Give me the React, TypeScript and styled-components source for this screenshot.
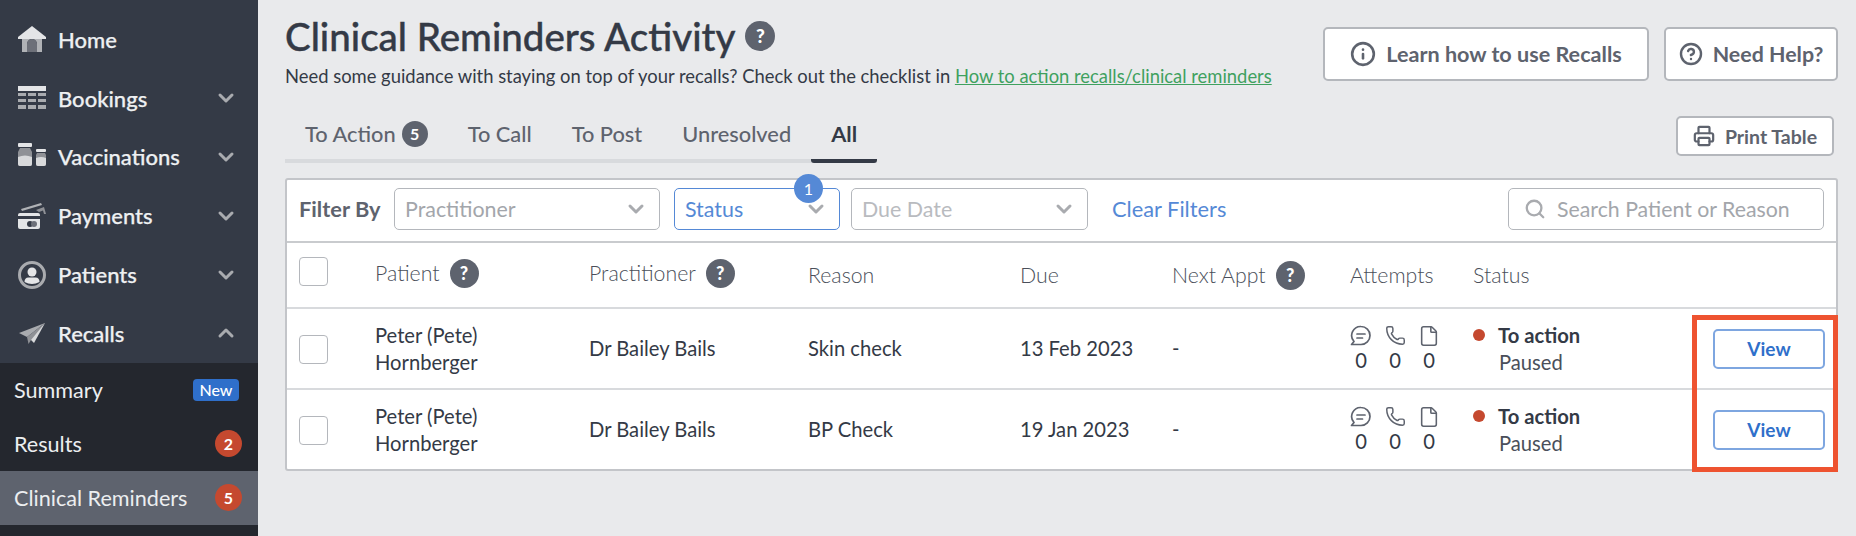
import React from "react";
import styled, { createGlobalStyle } from "styled-components";
import { ChevronDown, ChevronUp, CircleHelp, File, Info, Phone, Printer, Search } from "lucide-react";

const GlobalStyle = createGlobalStyle`
    html, body {
        margin: 0;
        height: 536px;
        overflow: hidden;
        background: #e9eaec;
        font-family: "Lato", "Liberation Sans", sans-serif;
        color: #343a46;
    }
    * { box-sizing: border-box; }
`;

const Page = styled.div`
    display: flex;
    height: 536px;
    width: 1856px;
`;

/* ------------------------------- Sidebar ------------------------------- */

const Sidebar = styled.nav`
    width: 258px;
    flex: none;
    height: 536px;
    background: #24272e;
    display: flex;
    flex-direction: column;
`;

const NavGroup = styled.div`
    background: #343a46;
    padding-top: 10px;
`;

const NavItem = styled.div`
    height: 58.8px;
    display: flex;
    align-items: center;
    padding: 0 20px 0 18px;
    color: #eef0f2;
    font-size: 22px;
    font-weight: 500;
    -webkit-text-stroke: 0.25px #eef0f2;
`;

const NavIcon = styled.svg`
    width: 28px;
    height: 28px;
    margin-right: 12px;
    flex: none;
    color: #c9cbce;
`;

const NavLabel = styled.span`
    flex: 1;
`;

const SubItem = styled.div<{ $active?: boolean }>`
    height: 54px;
    display: flex;
    align-items: center;
    justify-content: space-between;
    padding: 0 16px 0 14px;
    font-size: 21.6px;
    color: #eceef0;
    background: ${(p) => (p.$active ? "#5e636e" : "transparent")};
`;

const NewPill = styled.span`
    width: 46px;
    height: 22px;
    margin-right: 3px;
    border-radius: 4px;
    background: #2f6fca;
    color: #fff;
    font-size: 16px;
    font-weight: 500;
    display: flex;
    align-items: center;
    justify-content: center;
`;

const CountBadge = styled.span`
    width: 27px;
    height: 27px;
    border-radius: 50%;
    background: #c5492f;
    color: #fff;
    font-size: 16px;
    font-weight: 700;
    display: flex;
    align-items: center;
    justify-content: center;
`;

/* -------------------------------- Main --------------------------------- */

const Main = styled.main`
    flex: 1;
    min-width: 0;
    padding: 0 18px 0 27px;
`;

const TopBar = styled.header`
    display: flex;
    justify-content: space-between;
    align-items: flex-start;
    height: 110px;
`;

const TitleBlock = styled.div`
    padding-top: 14px;
`;

const Title = styled.h1`
    margin: 0;
    height: 44px;
    font-size: 38.5px;
    line-height: 44px;
    font-weight: 500;
    -webkit-text-stroke: 0.4px #343a46;
    color: #343a46;
    display: flex;
    align-items: center;
    gap: 10px;
`;

const Guidance = styled.p`
    margin: 7px 0 0;
    font-size: 18.4px;
    line-height: 22px;
    color: #343a46;
`;

const GuidanceLink = styled.a`
    color: #3fa15f;
    text-decoration: underline;
`;

const HelpDot = styled.span<{ $size?: number }>`
    width: ${(p) => p.$size ?? 29}px;
    height: ${(p) => p.$size ?? 29}px;
    border-radius: 50%;
    background: #5e636e;
    color: #fff;
    font-size: ${(p) => Math.round((p.$size ?? 29) * 0.62)}px;
    font-weight: 900;
    flex: none;
    display: inline-flex;
    align-items: center;
    justify-content: center;
    -webkit-text-stroke: 0;
`;

const TopActions = styled.div`
    display: flex;
    gap: 15px;
    padding-top: 27px;
`;

const OutlineButton = styled.button<{ $height: number; $size: number; $width: number }>`
    width: ${(p) => p.$width}px;
    height: ${(p) => p.$height}px;
    background: #fff;
    border: 2px solid #b4b7bc;
    border-radius: 5px;
    color: #5e636e;
    font-family: inherit;
    font-size: ${(p) => p.$size}px;
    font-weight: 700;
    padding: 0;
    display: flex;
    align-items: center;
    justify-content: center;
    gap: 10px;
`;

const TabBar = styled.div`
    display: flex;
    justify-content: space-between;
    align-items: flex-start;
    height: 68px;
`;

const Tabs = styled.div`
    display: flex;
    height: 53px;
    border-bottom: 4px solid #d8dadd;
`;

const Tab = styled.div<{ $active?: boolean }>`
    height: 53px;
    padding: 0 20px 2px;
    display: flex;
    align-items: center;
    gap: 6px;
    font-size: 21.8px;
    font-weight: ${(p) => (p.$active ? 700 : 500)};
    color: ${(p) => (p.$active ? "#343a46" : "#5e636e")};
    border-bottom: 4px solid ${(p) => (p.$active ? "#343a46" : "transparent")};
    border-radius: ${(p) => (p.$active ? "3px" : "0")};
`;

const TabCount = styled.span`
    width: 26px;
    height: 26px;
    border-radius: 50%;
    background: #5e636e;
    color: #fff;
    font-size: 16px;
    font-weight: 700;
    display: flex;
    align-items: center;
    justify-content: center;
`;

const PrintSlot = styled.div`
    padding: 6px 4px 0 0;
`;

/* -------------------------------- Table -------------------------------- */

const Card = styled.section`
    position: relative;
    background: #fff;
    border: 2px solid #c3c5c9;
    border-radius: 3px;
    width: 1553px;
`;

const FilterBar = styled.div`
    height: 63px;
    display: flex;
    align-items: center;
    padding: 0 12px 4px 12px;
    border-bottom: 2px solid #c9cbce;
`;

const FilterLabel = styled.span`
    width: 95px;
    flex: none;
    font-size: 21.8px;
    font-weight: 700;
    color: #5e636e;
`;

const Select = styled.div<{ $width: number; $focus?: boolean; $gap: number; $faint?: boolean }>`
    position: relative;
    width: ${(p) => p.$width}px;
    height: 42px;
    margin-right: ${(p) => p.$gap}px;
    flex: none;
    border: 1px solid ${(p) => (p.$focus ? "#5589d6" : "#b4b7bc")};
    border-radius: 5px;
    padding: 0 11px 0 10px;
    display: flex;
    align-items: center;
    justify-content: space-between;
    font-size: 21.4px;
    color: ${(p) => (p.$focus ? "#5589d6" : p.$faint ? "#b9bbbf" : "#a3a6ab")};
`;

const SelectBadge = styled.span`
    position: absolute;
    top: -15px;
    right: 16px;
    width: 29px;
    height: 29px;
    border-radius: 50%;
    background: #5589d6;
    color: #fff;
    font-size: 16px;
    display: flex;
    align-items: center;
    justify-content: center;
`;

const ClearFilters = styled.a`
    font-size: 21.8px;
    color: #5589d6;
    flex: 1;
`;

const SearchBox = styled.div`
    width: 316px;
    height: 42px;
    border: 1px solid #b4b7bc;
    border-radius: 5px;
    padding: 0 12px 0 15px;
    display: flex;
    align-items: center;
    gap: 11px;
    font-size: 21.3px;
    color: #a3a6ab;
`;

const Row = styled.div<{ $height: number; $last?: boolean }>`
    display: grid;
    grid-template-columns: 76px 214px 219px 212px 152px 178px 123px 240px 112px;
    align-items: center;
    padding-left: 12px;
    height: ${(p) => p.$height}px;
    border-bottom: ${(p) => (p.$last ? "none" : "2px solid #d8dadd")};
    font-size: 20.2px;
    line-height: 27px;
`;

const HeaderCell = styled.div<{ $raised?: boolean }>`
    display: flex;
    align-items: center;
    gap: 10px;
    margin-bottom: ${(p) => (p.$raised ? 3 : 0)}px;
    font-size: 21.3px;
    font-weight: 300;
    color: #4a4f5a;
`;

const CheckBox = styled.span<{ $head?: boolean }>`
    display: block;
    width: 29px;
    height: 29px;
    margin: ${(p) => (p.$head ? "0 0 7px" : "2px 0 0")};
    background: #fff;
    border: 1px solid #b4b7bc;
    border-radius: 4px;
`;

const Attempts = styled.div`
    display: grid;
    grid-template-columns: repeat(3, 22px);
    column-gap: 12px;
    justify-items: center;
    color: #5e636e;
`;

const AttemptCount = styled.span`
    color: #343a46;
    line-height: 26px;
`;

const StatusCell = styled.div`
    display: grid;
    grid-template-columns: 12px auto;
    column-gap: 13px;
    align-items: center;
`;

const StatusDot = styled.span`
    width: 12px;
    height: 12px;
    border-radius: 50%;
    background: #c5492f;
`;

const StatusName = styled.span`
    font-weight: 700;
`;

const StatusNote = styled.span`
    grid-column: 2;
    padding-left: 1px;
    color: #4a4f5a;
`;

const ViewButton = styled.button`
    width: 112px;
    height: 40px;
    background: #fff;
    border: 2px solid #7ea6e0;
    border-radius: 5px;
    color: #2f6fca;
    font-family: inherit;
    font-size: 19px;
    font-weight: 700;
    padding: 0;
`;

const Highlight = styled.div`
    position: absolute;
    right: -2px;
    bottom: -3px;
    width: 146px;
    height: 157px;
    border: 5px solid #ee5330;
    pointer-events: none;
`;

/* -------------------------------- Icons -------------------------------- */

const HomeIcon = () => (
    <NavIcon viewBox="0 0 28 28">
        <path d="M14 1 L28 12 V14 H0 V12 Z" fill="#e4e5e7" />
        <path d="M4 14 H24 V27 H19 V19 a5 5 0 0 0 -10 0 V27 H4 Z" fill="#b0b2b6" />
        <path d="M9 27 V19 a5 5 0 0 1 10 0 V27 Z" fill="#6d7079" />
    </NavIcon>
);

const BookingsIcon = () => (
    <NavIcon viewBox="0 0 28 28" fill="#a9abaf">
        <rect y="2" width="28" height="5" fill="#e4e5e7" />
        <rect y="9" width="8" height="3" />
        <rect x="10" y="9" width="8" height="3" />
        <rect x="20" y="9" width="8" height="3" />
        <rect y="15" width="8" height="3" />
        <rect x="10" y="15" width="8" height="3" />
        <rect x="20" y="15" width="8" height="3" />
        <rect y="21" width="8" height="4" />
        <rect x="10" y="21" width="8" height="4" />
        <rect x="20" y="21" width="8" height="4" />
    </NavIcon>
);

const VaccinationsIcon = () => (
    <NavIcon viewBox="0 0 28 28">
        <rect x="0" y="0" width="14" height="4" rx="1" fill="#e4e5e7" />
        <path d="M2 5 H12 L14 9 V21 q0 2 -2 2 H2 q-2 0 -2 -2 V9 Z" fill="#8f9196" />
        <path d="M0 14 q7 -3 14 0 V21 q0 2 -2 2 H2 q-2 0 -2 -2 Z" fill="#d8d9db" />
        <rect x="18" y="6" width="10" height="3" rx="1" fill="#e4e5e7" />
        <path d="M19 10 H27 L28 12 V21 q0 2 -2 2 H20 q-2 0 -2 -2 V12 Z" fill="#8f9196" />
        <path d="M18 15 q5 -2 10 0 V21 q0 2 -2 2 H20 q-2 0 -2 -2 Z" fill="#d8d9db" />
    </NavIcon>
);

const PaymentsIcon = () => (
    <NavIcon viewBox="0 0 28 28">
        <path d="M3 7 L23 1 L24 3 L4 9 Z" fill="#b0b2b6" />
        <path d="M18 8 L26 5 L28 12 H26 L25 8.5 L21 10 Z" fill="#8f9196" />
        <rect x="0" y="11" width="22" height="16" rx="2" fill="#e4e5e7" />
        <rect x="0" y="14" width="22" height="3" fill="#343a46" />
        <circle cx="12" cy="22" r="3" fill="#343a46" />
        <circle cx="16" cy="22" r="3" fill="#6d7079" />
    </NavIcon>
);

const PatientsIcon = () => (
    <NavIcon viewBox="0 0 28 28">
        <circle cx="14" cy="14" r="12.5" fill="none" stroke="#a9abaf" strokeWidth="3" />
        <circle cx="14" cy="11" r="4.5" fill="#e4e5e7" />
        <path d="M6.5 21 q0 -4.5 4 -4.5 h7 q4 0 4 4.5 q-7.500 4 -15 0 Z" fill="#e4e5e7" />
    </NavIcon>
);

const RecallsIcon = () => (
    <NavIcon viewBox="0 0 28 28">
        <path d="M27 4 L1 14 L9 18 Z" fill="#a9abaf" />
        <path d="M27 4 L11 19 L16 24 Z" fill="#d8d9db" />
        <path d="M27 4 L9 18 L10.500 25 L13 21 Z" fill="#8f9196" />
    </NavIcon>
);

const ChatIcon = () => (
    <svg width="22" height="22" viewBox="0 0 22 22" fill="none" stroke="currentColor" strokeWidth="1.7" strokeLinecap="round" strokeLinejoin="round">
        <path d="M11 1.500 a9 9 0 0 1 0 18 H1.500 L4 16.500 A9 9 0 0 1 11 1.500 Z" />
        <path d="M7 9 H15" />
        <path d="M7 13 H12.500" />
    </svg>
);

const NavChevron = ({ up = false }: { up?: boolean }) =>
    up ? <ChevronUp size={24} color="#a9abaf" strokeWidth={3} /> : <ChevronDown size={24} color="#a9abaf" strokeWidth={3} />;

const SelectChevron = () => <ChevronDown size={24} color="#a9abaf" strokeWidth={3} />;

/* --------------------------------- Data -------------------------------- */

const NAV = [
    { label: "Home", Icon: HomeIcon, chevron: false },
    { label: "Bookings", Icon: BookingsIcon, chevron: true },
    { label: "Vaccinations", Icon: VaccinationsIcon, chevron: true },
    { label: "Payments", Icon: PaymentsIcon, chevron: true },
    { label: "Patients", Icon: PatientsIcon, chevron: true },
];

const RECALLS = [
    { id: 1, reason: "Skin check", due: "13 Feb 2023" },
    { id: 2, reason: "BP Check", due: "19 Jan 2023" },
];

const App = () => {
    return (
        <Page>
            <GlobalStyle />
            <Sidebar>
                <NavGroup>
                    {NAV.map(({ label, Icon, chevron }) => (
                        <NavItem key={label}>
                            <Icon />
                            <NavLabel>{label}</NavLabel>
                            {chevron && <NavChevron />}
                        </NavItem>
                    ))}
                    <NavItem>
                        <RecallsIcon />
                        <NavLabel>Recalls</NavLabel>
                        <NavChevron up />
                    </NavItem>
                </NavGroup>
                <SubItem>
                    Summary
                    <NewPill>New</NewPill>
                </SubItem>
                <SubItem>
                    Results
                    <CountBadge>2</CountBadge>
                </SubItem>
                <SubItem $active>
                    Clinical Reminders
                    <CountBadge>5</CountBadge>
                </SubItem>
            </Sidebar>
            <Main>
                <TopBar>
                    <TitleBlock>
                        <Title>
                            Clinical Reminders Activity <HelpDot $size={30}>?</HelpDot>
                        </Title>
                        <Guidance>
                            Need some guidance with staying on top of your recalls? Check out the checklist in{" "}
                            <GuidanceLink>How to action recalls/clinical reminders</GuidanceLink>
                        </Guidance>
                    </TitleBlock>
                    <TopActions>
                        <OutlineButton $width={326} $height={54} $size={21.6}>
                            <Info size={26} strokeWidth={2.4} />
                            Learn how to use Recalls
                        </OutlineButton>
                        <OutlineButton $width={174} $height={54} $size={21.4}>
                            <CircleHelp size={24} strokeWidth={2.4} />
                            Need Help?
                        </OutlineButton>
                    </TopActions>
                </TopBar>
                <TabBar>
                    <Tabs>
                        <Tab>
                            To Action <TabCount>5</TabCount>
                        </Tab>
                        <Tab>To Call</Tab>
                        <Tab>To Post</Tab>
                        <Tab>Unresolved</Tab>
                        <Tab $active>All</Tab>
                    </Tabs>
                    <PrintSlot>
                        <OutlineButton $width={158} $height={40} $size={19.5}>
                            <Printer size={22} strokeWidth={2.4} />
                            Print Table
                        </OutlineButton>
                    </PrintSlot>
                </TabBar>
                <Card>
                    <FilterBar>
                        <FilterLabel>Filter By</FilterLabel>
                        <Select $width={266} $gap={14}>
                            Practitioner
                            <SelectChevron />
                        </Select>
                        <Select $width={166} $gap={11} $focus>
                            Status
                            <SelectBadge>1</SelectBadge>
                            <SelectChevron />
                        </Select>
                        <Select $width={237} $gap={24} $faint>
                            Due Date
                            <SelectChevron />
                        </Select>
                        <ClearFilters>Clear Filters</ClearFilters>
                        <SearchBox>
                            <Search size={22} color="#a9abaf" strokeWidth={2.5} />
                            Search Patient or Reason
                        </SearchBox>
                    </FilterBar>
                    <Row $height={66}>
                        <CheckBox $head />
                        <HeaderCell $raised>
                            Patient <HelpDot>?</HelpDot>
                        </HeaderCell>
                        <HeaderCell $raised>
                            Practitioner <HelpDot>?</HelpDot>
                        </HeaderCell>
                        <HeaderCell>Reason</HeaderCell>
                        <HeaderCell>Due</HeaderCell>
                        <HeaderCell>
                            Next Appt <HelpDot>?</HelpDot>
                        </HeaderCell>
                        <HeaderCell>Attempts</HeaderCell>
                        <HeaderCell>Status</HeaderCell>
                    </Row>
                    {RECALLS.map((recall, i) => (
                        <Row key={recall.id} $height={i === 0 ? 81 : 79} $last={i === RECALLS.length - 1}>
                            <CheckBox />
                            <div>
                                Peter (Pete)
                                <br />
                                Hornberger
                            </div>
                            <div>Dr Bailey Bails</div>
                            <div>{recall.reason}</div>
                            <div>{recall.due}</div>
                            <div>-</div>
                            <Attempts>
                                <ChatIcon />
                                <Phone size={21} strokeWidth={1.7} />
                                <File size={22} strokeWidth={1.7} />
                                <AttemptCount>0</AttemptCount>
                                <AttemptCount>0</AttemptCount>
                                <AttemptCount>0</AttemptCount>
                            </Attempts>
                            <StatusCell>
                                <StatusDot />
                                <StatusName>To action</StatusName>
                                <StatusNote>Paused</StatusNote>
                            </StatusCell>
                            <ViewButton>View</ViewButton>
                        </Row>
                    ))}
                    <Highlight />
                </Card>
            </Main>
        </Page>
    );
};

export default App;
